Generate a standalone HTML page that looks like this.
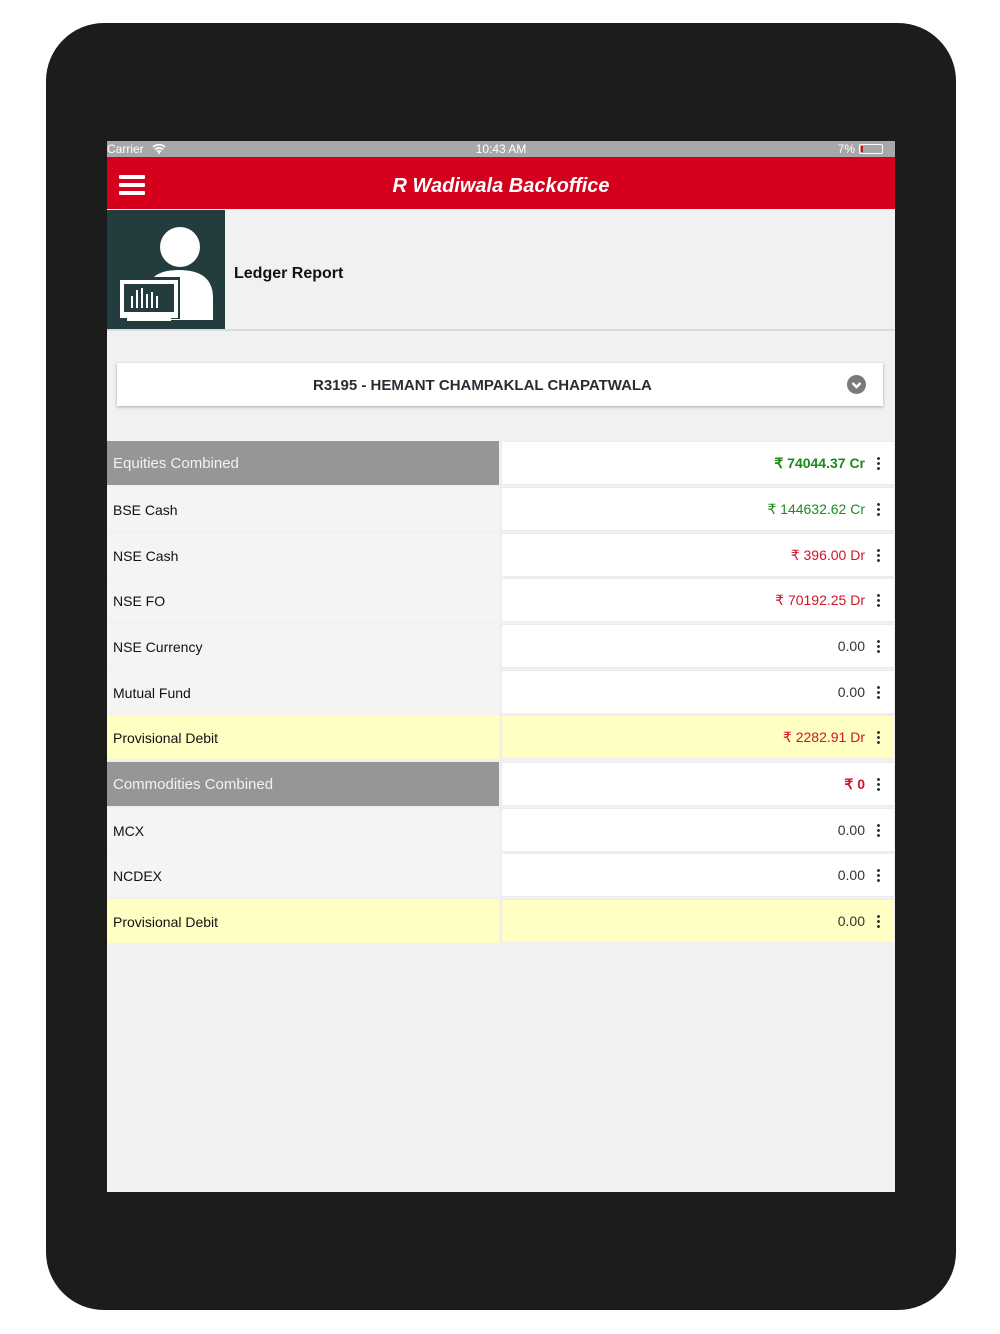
<!DOCTYPE html>
<html><head><meta charset="utf-8"><style>
*{margin:0;padding:0;box-sizing:border-box}
body{width:1000px;height:1334px;background:#fff;position:relative;font-family:"Liberation Sans",sans-serif;overflow:hidden}
.dev{position:absolute;left:46px;top:23px;width:910px;height:1287px;background:#1c1c1c;border-radius:58px}
.scr{position:absolute;left:107px;top:141px;width:788px;height:1051px;background:#f1f1f1;overflow:hidden}
.sb{position:absolute;left:0;top:0;width:788px;height:16px;background:#a8a8aa;color:#fff;font-size:12px;line-height:16px}
.hd{position:absolute;left:0;top:16px;width:788px;height:52px;background:#d4001c}
.ttl{position:absolute;left:0;width:788px;top:3px;line-height:52px;text-align:center;color:#fff;font-style:italic;font-weight:bold;font-size:20px}
.ham{position:absolute;left:12px;width:26px;height:4px;background:#fff;border-radius:1px}
.ib{position:absolute;left:0;top:69px;width:118px;height:120px;background:#233d3e}
.line{position:absolute;left:0;top:188px;width:788px;height:2px;background:#d6dbe2}
.dd{position:absolute;left:10px;top:222px;width:766px;height:43px;background:#fff;box-shadow:0 1px 3px rgba(0,0,0,.3);line-height:45px;font-weight:bold;font-size:15px;color:#2b2b35}
.r{position:absolute;left:0;width:788px;height:44px}
.l{position:absolute;left:0;top:0;width:392px;height:44px;background:#f4f4f4;font-size:14px;line-height:46px;padding-left:6px;color:#111}
.v{position:absolute;left:394px;top:0;width:394px;height:44px;background:#fff;border:1px solid #ececec;font-size:14px;line-height:42px;text-align:right;padding-right:29px;color:#333}
.k{position:absolute;right:14px;top:14px;width:3px;height:14px;background:radial-gradient(circle,#333 1.3px,transparent 1.6px) 0 0/3px 5px}
.g .l{background:#969696;color:#f2f2f2;font-size:15px}
.y .l,.y .v{background:#ffffc4}
</style></head><body>
<div class="dev"></div>
<div class="scr">
<div class="sb"><span style="position:absolute;left:0">Carrier</span><svg style="position:absolute;left:45px;top:2px" width="14" height="11" viewBox="0 0 14 11"><path d="M1 4a9 9 0 0 1 12 0M3 6.5a6 6 0 0 1 8 0M5 8.7a3 3 0 0 1 4 0" stroke="#fff" stroke-width="1.6" fill="none"/><circle cx="7" cy="10" r="1" fill="#fff"/></svg><span style="position:absolute;left:0;width:788px;text-align:center">10:43 AM</span><span style="position:absolute;right:40px">7%</span><span style="position:absolute;right:12px;top:3px;width:24px;height:10px;border:1px solid #fff;border-radius:2px"><span style="position:absolute;left:1px;top:1px;width:2px;height:6px;background:#e00"></span></span></div>
<div class="hd"><div class="ham" style="top:18px"></div><div class="ham" style="top:26px"></div><div class="ham" style="top:34px"></div><div class="ttl">R Wadiwala Backoffice</div></div>
<div class="ib"><svg width="118" height="120" viewBox="0 0 118 120"><ellipse cx="73" cy="37" rx="20" ry="20" fill="#fff"/><path d="M42 110 V80 Q42 60 72 60 Q106 60 106 88 V110 Z" fill="#fff"/><rect x="11" y="67" width="62" height="42" fill="#233d3e"/><rect x="13" y="70" width="58" height="38" fill="#fff"/><rect x="17" y="74" width="50" height="28" fill="#233d3e"/><path d="M25 98V86M30 98V80M35 98V78M40 98V84M45 98V82M50 98V86" stroke="#fff" stroke-width="2"/><rect x="20" y="108" width="44" height="3" fill="#fff"/></svg></div>
<div style="position:absolute;left:127px;top:124px;font-size:16px;font-weight:bold;color:#111">Ledger Report</div>
<div class="line"></div>
<div class="dd"><span style="position:absolute;left:196px">R3195 - HEMANT CHAMPAKLAL CHAPATWALA</span><svg style="position:absolute;right:17px;top:12px" width="19" height="19" viewBox="0 0 19 19"><circle cx="9.5" cy="9.5" r="9.5" fill="#7a7a7a"/><path d="M5.5 8l4 4 4-4" stroke="#fff" stroke-width="2.4" fill="none"/></svg></div>

<div class="r g" style="top:300px"><div class="l">Equities Combined</div><div class="v" style="color:#1a8a1a;font-weight:bold">₹ 74044.37 Cr<div class="k"></div></div></div>
<div class="r" style="top:346px"><div class="l">BSE Cash</div><div class="v" style="color:#1f8a1f">₹ 144632.62 Cr<div class="k"></div></div></div>
<div class="r" style="top:392px"><div class="l">NSE Cash</div><div class="v" style="color:#d0142a">₹ 396.00 Dr<div class="k"></div></div></div>
<div class="r" style="top:437px"><div class="l">NSE FO</div><div class="v" style="color:#d0142a">₹ 70192.25 Dr<div class="k"></div></div></div>
<div class="r" style="top:483px"><div class="l">NSE Currency</div><div class="v">0.00<div class="k"></div></div></div>
<div class="r" style="top:529px"><div class="l">Mutual Fund</div><div class="v">0.00<div class="k"></div></div></div>
<div class="r y" style="top:574px"><div class="l">Provisional Debit</div><div class="v" style="color:#d0142a">₹ 2282.91 Dr<div class="k"></div></div></div>
<div class="r g" style="top:621px"><div class="l">Commodities Combined</div><div class="v" style="color:#d0142a;font-weight:bold">₹ 0<div class="k"></div></div></div>
<div class="r" style="top:667px"><div class="l">MCX</div><div class="v">0.00<div class="k"></div></div></div>
<div class="r" style="top:712px"><div class="l">NCDEX</div><div class="v">0.00<div class="k"></div></div></div>
<div class="r y" style="top:758px"><div class="l">Provisional Debit</div><div class="v">0.00<div class="k"></div></div></div>
</div>
</body></html>
